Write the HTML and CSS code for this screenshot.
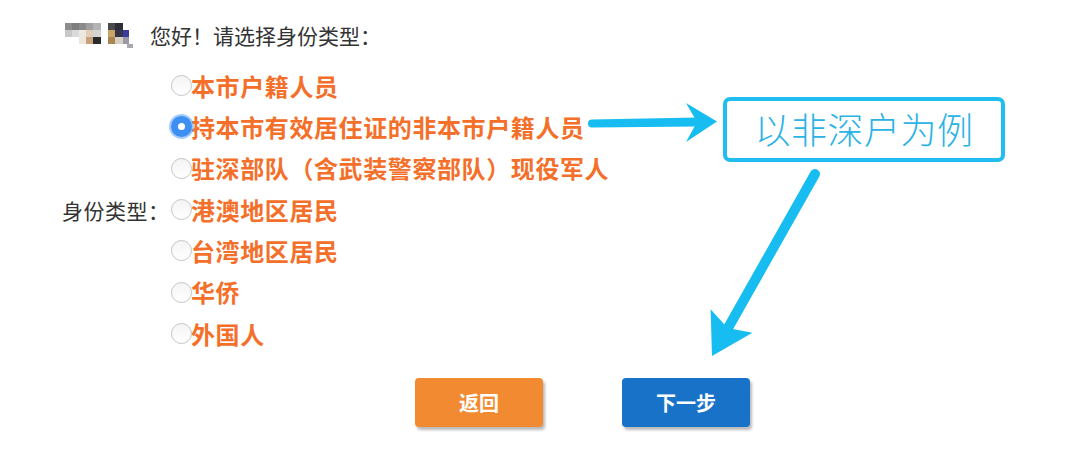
FILE: index.html
```html
<!DOCTYPE html>
<html lang="zh-CN">
<head>
<meta charset="utf-8">
<title>请选择身份类型</title>
<link rel="stylesheet" href="styles.css">
</head>
<body>
<div class="page">
  <div class="greet">
    <svg class="avatar" width="68" height="26" viewBox="0 0 68 26">
      <rect x="0" y="1" width="7" height="7" fill="#8c8c8c"/>
      <rect x="7" y="1" width="7" height="7" fill="#7e7e7e"/>
      <rect x="14" y="1" width="7" height="7" fill="#8a8a8a"/>
      <rect x="21" y="1" width="7" height="7" fill="#a0a0a0"/>
      <rect x="28" y="1" width="8" height="7" fill="#b4b4b4"/>
      <rect x="0" y="8" width="7" height="7" fill="#c8c8c8"/>
      <rect x="7" y="8" width="7" height="7" fill="#dadada"/>
      <rect x="14" y="8" width="7" height="7" fill="#ece8e2"/>
      <rect x="21" y="8" width="7" height="7" fill="#e3cdb6"/>
      <rect x="28" y="8" width="8" height="7" fill="#d4d4d4"/>
      <rect x="21" y="15" width="7" height="7" fill="#c8a27c"/>
      <rect x="28" y="15" width="8" height="7" fill="#2a2a2a"/>
      <rect x="14" y="15" width="7" height="7" fill="#efe6da"/>
      <rect x="43" y="1" width="7" height="7" fill="#4a4a4a"/>
      <rect x="50" y="1" width="8" height="7" fill="#2d2d3a"/>
      <rect x="43" y="8" width="7" height="7" fill="#c9a467"/>
      <rect x="50" y="8" width="8" height="7" fill="#35354a"/>
      <rect x="58" y="8" width="6" height="7" fill="#3b3aa3"/>
      <rect x="43" y="15" width="7" height="7" fill="#a98552"/>
      <rect x="50" y="15" width="8" height="7" fill="#d6d0c4"/>
      <rect x="58" y="15" width="6" height="7" fill="#9a9aa6"/>
      <rect x="62" y="22" width="6" height="4" fill="#a8a8b0"/>
    </svg>
    <span class="greet-text">您好！请选择身份类型：</span>
  </div>

  <div class="form">
    <div class="form-label">身份类型：</div>
    <div class="options">
      <label class="option"><span class="radio"></span><span class="opt-text">本市户籍人员</span></label>
      <label class="option"><span class="radio checked"></span><span class="opt-text">持本市有效居住证的非本市户籍人员</span></label>
      <label class="option"><span class="radio"></span><span class="opt-text">驻深部队（含武装警察部队）现役军人</span></label>
      <label class="option"><span class="radio"></span><span class="opt-text">港澳地区居民</span></label>
      <label class="option"><span class="radio"></span><span class="opt-text">台湾地区居民</span></label>
      <label class="option"><span class="radio"></span><span class="opt-text">华侨</span></label>
      <label class="option"><span class="radio"></span><span class="opt-text">外国人</span></label>
    </div>
  </div>

  <div class="actions">
    <button class="btn btn-back">返回</button>
    <button class="btn btn-next">下一步</button>
  </div>

  <div class="callout">以非深户为例</div>

  <svg class="arrows" width="1080" height="450" viewBox="0 0 1080 450">
    <path d="M592 119.5 L697 117.5 L697 126.5 L592 127.5 A4 4 0 0 1 592 119.5 Z" fill="#17bdf0"/>
    <polygon points="686,103 717,121.5 686,142 697,122" fill="#17bdf0"/>
    <line x1="815" y1="174" x2="728" y2="328" stroke="#17bdf0" stroke-width="10" stroke-linecap="round"/>
    <polygon points="710.6,309.3 727.6,328 752.4,332.7 712,356" fill="#17bdf0"/>
  </svg>
</div>
</body>
</html>
```

FILE: styles.css
```css
html, body {
  margin: 0;
  padding: 0;
  background: #ffffff;
}

body {
  font-family: "Noto Sans CJK SC", "Noto Sans", sans-serif;
  color: #333333;
}

.page {
  position: relative;
  width: 1080px;
  height: 450px;
  overflow: hidden;
  padding-top: 22px;
  box-sizing: border-box;
}

.greet {
  display: flex;
  align-items: center;
  padding-left: 65px;
  height: 26px;
}

.avatar {
  display: block;
  margin-right: 17px;
}

.greet-text {
  font-size: 21px;
  line-height: 26px;
  color: #333;
}

.form {
  display: flex;
  align-items: center;
  margin-top: 17px;
  padding-left: 62px;
}

.form-label {
  width: 109px;
  font-size: 21px;
  color: #333;
  line-height: 24px;
  letter-spacing: 0.5px;
}

.options {
  display: flex;
  flex-direction: column;
}

.option {
  display: flex;
  align-items: center;
  height: 41.33px;
}

.radio {
  width: 21px;
  height: 21px;
  border: 1.5px solid #c4c4c4;
  border-radius: 50%;
  background: linear-gradient(#f4f4f4, #ffffff);
  margin-right: -1px;
  box-sizing: border-box;
  position: relative;
  flex: none;
}

.radio.checked {
  width: 21px;
  height: 21px;
  border: none;
  background: #3d8ff2;
  box-shadow: 0 0 0 2px rgba(90, 160, 250, 0.55);
}

.radio.checked::after {
  content: "";
  position: absolute;
  left: 7px;
  top: 7px;
  width: 7px;
  height: 7px;
  border-radius: 50%;
  background: #ffffff;
}

.opt-text {
  font-size: 24px;
  font-weight: 700;
  color: #f4702a;
  line-height: 30px;
  letter-spacing: 0.6px;
}

.actions {
  display: flex;
  gap: 79px;
  margin-top: 24px;
  padding-left: 415px;
}

.btn {
  width: 128px;
  height: 49px;
  border: none;
  border-radius: 4px;
  color: #ffffff;
  font-family: "Noto Sans CJK SC", sans-serif;
  font-size: 20px;
  font-weight: 700;
  box-shadow: 2px 3px 3px rgba(0, 0, 0, 0.28);
  padding: 0;
}

.btn-back {
  background: #f28a31;
}

.btn-next {
  background: #1873c8;
}

.callout {
  position: absolute;
  left: 723px;
  top: 97px;
  width: 282px;
  height: 65px;
  box-sizing: border-box;
  border: 4px solid #1fbdf0;
  border-radius: 7px;
  background: #ffffff;
  color: #2bb3e6;
  font-size: 36px;
  font-weight: 300;
  line-height: 55px;
  text-align: center;
  letter-spacing: 0.5px;
}

.arrows {
  position: absolute;
  left: 0;
  top: 0;
  pointer-events: none;
}
```
